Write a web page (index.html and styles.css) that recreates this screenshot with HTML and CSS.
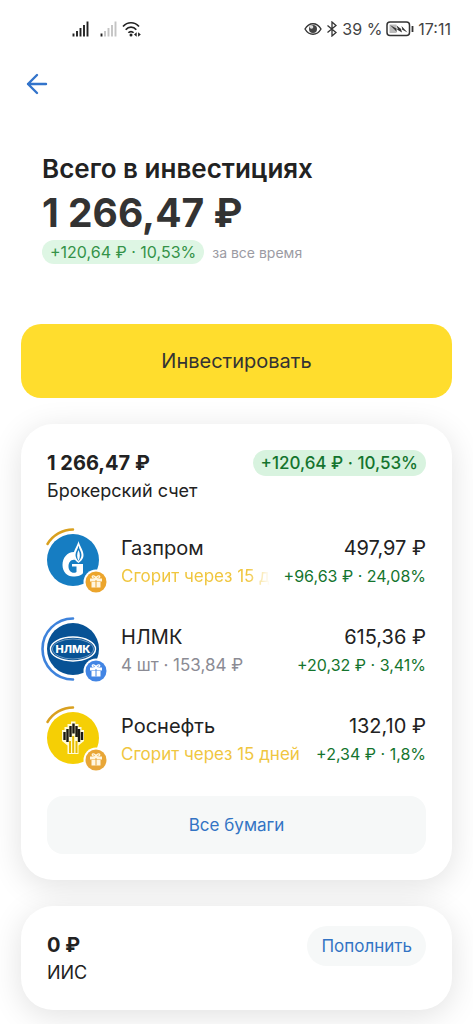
FILE: index.html
```html
<!DOCTYPE html>
<html lang="ru">
<head>
    <meta charset="UTF-8">
    <meta name="viewport" content="width=device-width, initial-scale=1.0">
    <title>Инвестиции</title>
    <link rel="stylesheet" href="styles.css">
</head>
<body>
    <div class="status-bar">
        <div class="status-group">
            <svg class="signal" width="18" height="16" viewBox="0 0 18 16" stroke="#222" stroke-width="1.9">
                <path d="M1.5 12.500v3M5 10v5.500M8.500 7v8.500M12 4v11.500M15.500 .5v15"/>
            </svg>
            <svg width="18" height="16" viewBox="0 0 18 16" stroke="#c4c4c4" stroke-width="1.9">
                <path d="M1.5 12.500v3" stroke="#222"/>
                <path d="M5 10v5.500M8.500 7v8.500M12 4v11.500M15.500 .5v15"/>
            </svg>
            <svg width="19" height="16" viewBox="0 0 19 16" fill="none" stroke="#222" stroke-width="1.7">
                <path d="M1 5.500c4.500-5 11.500-5 16 0M3.700 8.800c3-3.500 7.600-3.500 10.600 0M6.400 11.800c1.500-1.700 3.700-1.700 5.200 0"/>
                <circle cx="9" cy="14" r="1.500" fill="#222" stroke="none"/>
                <path d="M12 13.500l2.700-2.200v4.400zM18.800 13.500l-2.700-2.200v4.400z" fill="#222" stroke="none"/>
            </svg>
        </div>
        <div class="status-group">
            <svg width="18" height="14" viewBox="0 0 18 14" fill="none" stroke="#333" stroke-width="1.400">
                <path d="M1 7c4-7 12-7 16 0c-4 7-12 7-16 0z"/>
                <circle cx="9" cy="7" r="4" fill="#444" stroke="none"/>
                <circle cx="7.500" cy="5" r="1.800" fill="#ddd" stroke="none"/>
            </svg>
            <svg width="12" height="16" viewBox="0 0 12 16" fill="none" stroke="#333" stroke-width="1.300">
                <path d="M1.500 4.500l8.500 7L6 15V1l4 3.500-8.500 7"/>
            </svg>
            <span>39 %</span>
            <svg width="28" height="16" viewBox="0 0 28 16" fill="none" stroke="#333" stroke-width="1.500">
                <rect x="1" y="1" width="22.500" height="13.500" rx="3"/>
                <rect x="3.500" y="3.500" width="7" height="8.500" fill="#bbb" stroke="none"/>
                <path d="M4 4l8 4.500-1.500-4 6 4.500-1-4 6 6.500-6.500-3.500 1 3.500-6-3.500 1 3z" fill="#333" stroke="none"/>
                <path d="M26.500 5v6" stroke-width="1.800"/>
            </svg>
            <span>17:11</span>
        </div>
    </div>

    <header class="top-bar">
        <a href="#" class="back" aria-label="Назад">
            <svg width="22" height="22" viewBox="0 0 22 22" fill="none" stroke="#3374cb" stroke-width="2.400" stroke-linecap="round" stroke-linejoin="round">
                <path d="M20 11H2M11 2L2 11l9 9"/>
            </svg>
        </a>
    </header>

    <section class="total">
        <h1>Всего в инвестициях</h1>
        <p class="total-sum">1 266,47 ₽</p>
        <div class="total-profit">
            <span class="profit-badge small">+120,64 ₽ · 10,53%</span>
            <span class="period">за все время</span>
        </div>
    </section>

    <main>
        <button type="button" class="invest-btn">Инвестировать</button>

        <section class="card">
            <div class="card-head">
                <div>
                    <h2>1 266,47 ₽</h2>
                    <p class="account">Брокерский счет</p>
                </div>
                <span class="profit-badge">+120,64 ₽ · 10,53%</span>
            </div>

            <ul class="stocks">
                <li class="stock">
                    <svg class="logo" width="52" height="52" viewBox="0 0 52 52">
                        <circle cx="26" cy="26" r="26" fill="#167dc2"/>
                        <path d="M.5 10A30 30 0 0 1 26-4.500" fill="none" stroke="#d9a01f" stroke-width="2.500" stroke-linecap="round"/>
                        <path d="M27 18C20 18 15.500 24 15.500 31c0 7 5 11.500 10.500 11.500c5 0 10-1.500 10-4V30H25v2.500h4.500V38c-4 2.500-8-1-8-5.500c0-4.500 3-7.500 6.500-6.500z" fill="#fff"/>
                        <path d="M31.500 7c-1 5-5 9-5 14c0 4 2.500 6 5 8c2.500-2 5-4 5-8c0-5-4-9-5-14z" fill="#fff"/>
                        <path d="M31.500 11.500c-.7 4-3 6-3 9.500c0 2.500 1.500 4.500 3 6.500c1.500-2 3-4 3-6.500c0-3.500-2.300-5.500-3-9.500z" fill="#167dc2"/>
                        <path d="M31.500 16c-1.800 4-1.800 7 0 11c1.800-4 1.800-7 0-11z" fill="#fff"/>
                        <circle cx="49" cy="48" r="12.500" fill="#fff"/>
                        <circle cx="49" cy="48" r="10.500" fill="#eca52c"/>
                        <path d="M43 44.500h12v3H43zM44.500 48h9v5.500h-9z" fill="#fff6e0"/>
                        <path d="M49 44.500c-6 0-4-5 0-1c4-4 6 1 0 1z" fill="none" stroke="#fff6e0" stroke-width="1.300"/>
                        <path d="M49 46v7.500" stroke="#eca52c"/>
                    </svg>
                    <div class="stock-info">
                        <div class="stock-line name">
                            <span>Газпром</span>
                            <span>497,97 ₽</span>
                        </div>
                        <div class="stock-line detail">
                            <span class="expires faded">Сгорит через 15 дней</span>
                            <span class="profit">+96,63 ₽ · 24,08%</span>
                        </div>
                    </div>
                </li>
                <li class="stock">
                    <svg class="logo" width="52" height="52" viewBox="0 0 52 52">
                        <circle cx="26" cy="26" r="26" fill="#075295"/>
                        <path d="M26-4.500a30.500 30.500 0 0 0 0 61" fill="none" stroke="#3e83dc" stroke-width="2.600" stroke-linecap="round"/>
                        <ellipse cx="26" cy="26" rx="22.500" ry="12" fill="none" stroke="#fff" stroke-width="1.400"/>
                        <ellipse cx="26" cy="26" rx="20.500" ry="10" fill="none" stroke="#9bb9d6" stroke-width=".7"/>
                        <text class="logo-text" x="26" y="30" text-anchor="middle">НЛМК</text>
                        <circle cx="49" cy="48" r="12.500" fill="#fff"/>
                        <circle cx="49" cy="48" r="10.500" fill="#4285e4"/>
                        <path d="M43 44.500h12v3H43zM44.500 48h9v5.500h-9z" fill="#fff"/>
                        <path d="M49 44.500c-6 0-4-5 0-1c4-4 6 1 0 1z" fill="none" stroke="#fff" stroke-width="1.300"/>
                        <path d="M49 46v7.500" stroke="#4285e4"/>
                    </svg>
                    <div class="stock-info">
                        <div class="stock-line name">
                            <span>НЛМК</span>
                            <span>615,36 ₽</span>
                        </div>
                        <div class="stock-line detail">
                            <span class="amount">4 шт · 153,84 ₽</span>
                            <span class="profit">+20,32 ₽ · 3,41%</span>
                        </div>
                    </div>
                </li>
                <li class="stock">
                    <svg class="logo" width="52" height="52" viewBox="0 0 52 52">
                        <circle cx="26" cy="26" r="26" fill="#f5cf05"/>
                        <path d="M.5 10A30 30 0 0 1 26-4.500" fill="none" stroke="#d9a01f" stroke-width="2.500" stroke-linecap="round"/>
                        <path d="M24 9.500h4.500V12h3v3h3v3H37v11l-5.500 4.500V42h-11v-8.500L15 29V18h2.500v-3h3v-3H24z" fill="#fffbd6"/>
                        <path d="M17.500 20v8M20.500 17v13M23.500 14v11M26.500 11.500v10M29.500 14v11M32 17v13M35 20v8" stroke="#1c1a12" stroke-width="2.400"/>
                        <path d="M23 41V29M26.200 41V24M29.500 41V29" stroke="#e8bd00" stroke-width="2"/>
                        <circle cx="49" cy="48" r="12.500" fill="#fff"/>
                        <circle cx="49" cy="48" r="10.500" fill="#e8a637"/>
                        <path d="M43 44.500h12v3H43zM44.500 48h9v5.500h-9z" fill="#fff6e0"/>
                        <path d="M49 44.500c-6 0-4-5 0-1c4-4 6 1 0 1z" fill="none" stroke="#fff6e0" stroke-width="1.300"/>
                        <path d="M49 46v7.500" stroke="#e8a637"/>
                    </svg>
                    <div class="stock-info">
                        <div class="stock-line name">
                            <span>Роснефть</span>
                            <span>132,10 ₽</span>
                        </div>
                        <div class="stock-line detail">
                            <span class="expires">Сгорит через 15 дней</span>
                            <span class="profit">+2,34 ₽ · 1,8%</span>
                        </div>
                    </div>
                </li>
            </ul>

            <button type="button" class="all-btn">Все бумаги</button>
        </section>

        <section class="card card-short">
            <div class="card-head">
                <div>
                    <h2>0 ₽</h2>
                    <p class="account">ИИС</p>
                </div>
                <button type="button" class="refill-btn">Пополнить</button>
            </div>
        </section>
    </main>
</body>
</html>
```

FILE: styles.css
```css
*,
*::after,
*::before{
    padding: 0;
    margin: 0;
    box-sizing: border-box;
}
body{
    font-family: Inter, "Noto Sans", sans-serif;
    font-size: 16px;
    color: #222;
    background-color: #fff;
}
button{
    font-family: inherit;
    border: none;
    cursor: pointer;
}

/* status bar */
.status-bar{
    display: flex;
    justify-content: space-between;
    align-items: center;
    height: 58px;
    padding: 0 22px 0 72px;
    color: #444;
}
.status-group{
    display: flex;
    align-items: center;
    gap: 4px;
}
.signal{
    margin-right: 6px;
}

.top-bar{
    height: 94px;
    padding: 15px 26px;
}
.back{
    display: inline-block;
}
.back svg{
    display: block;
}

/* total */
.total{
    padding: 0 42px;
}
h1{
    font-size: 26px;
    line-height: 34px;
    font-weight: 600;
}
.total-sum{
    font-size: 39px;
    line-height: 54px;
    font-weight: 700;
    color: #333;
}
.total-profit{
    display: flex;
    align-items: center;
    gap: 8px;
}
.profit-badge{
    padding: 0 8px;
    border-radius: 13px;
    font-size: 17px;
    line-height: 26px;
    font-weight: 500;
    white-space: nowrap;
    color: #14742e;
    background-color: #d8f3df;
}
.profit-badge.small{
    font-size: 16px;
    line-height: 24px;
    font-weight: 400;
    color: #349248;
    background-color: #def6e4;
}
.period{
    font-size: 14px;
    color: #9b9ba3;
}

main{
    display: flex;
    flex-direction: column;
    gap: 26px;
    padding: 60px 21px 14px;
}
.invest-btn{
    height: 74px;
    border-radius: 20px;
    font-size: 20px;
    color: #333;
    background-color: #ffdd2d;
}

/* cards */
.card{
    padding: 26px;
    border-radius: 32px;
    background-color: #fff;
    box-shadow: 0 6px 32px rgba(0, 0, 0, 0.12);
}
.card-short{
    padding: 20px 26px 22px;
}
.card-head{
    display: flex;
    justify-content: space-between;
    align-items: flex-start;
}
.card-short h2{
    margin-top: 6px;
}
h2{
    font-size: 20px;
    line-height: 26px;
    font-weight: 700;
}
.account{
    font-size: 18px;
    line-height: 30px;
}

.stocks{
    display: grid;
    grid-template-columns: minmax(0, 1fr);
    gap: 33px;
    padding: 28px 0;
    list-style: none;
}
.stock{
    display: flex;
    gap: 22px;
}
.logo{
    flex: none;
    overflow: visible;
}
.logo-text{
    font-size: 11px;
    font-weight: 800;
    fill: #fff;
}
.stock-info{
    flex: 1;
    min-width: 0;
}
.stock-line{
    display: flex;
    justify-content: space-between;
    gap: 14px;
    line-height: 28px;
    white-space: nowrap;
}
.name{
    font-size: 20px;
}
.detail{
    font-size: 16px;
}
.expires,
.amount{
    font-size: 17px;
}
.expires{
    min-width: 0;
    overflow: hidden;
    color: #f0c63f;
}
.faded{
    mask-image: linear-gradient(to right, #000 85%, transparent);
}
.amount{
    color: #8b8b94;
}
.profit{
    color: #14742e;
}

.all-btn{
    display: block;
    width: 100%;
    height: 58px;
    border-radius: 16px;
    font-size: 17px;
    color: #3374c4;
    background-color: #f6f8f8;
}
.refill-btn{
    height: 40px;
    padding: 0 14px;
    border-radius: 20px;
    font-size: 17px;
    color: #3374c4;
    background-color: #f6f8f8;
}
```
